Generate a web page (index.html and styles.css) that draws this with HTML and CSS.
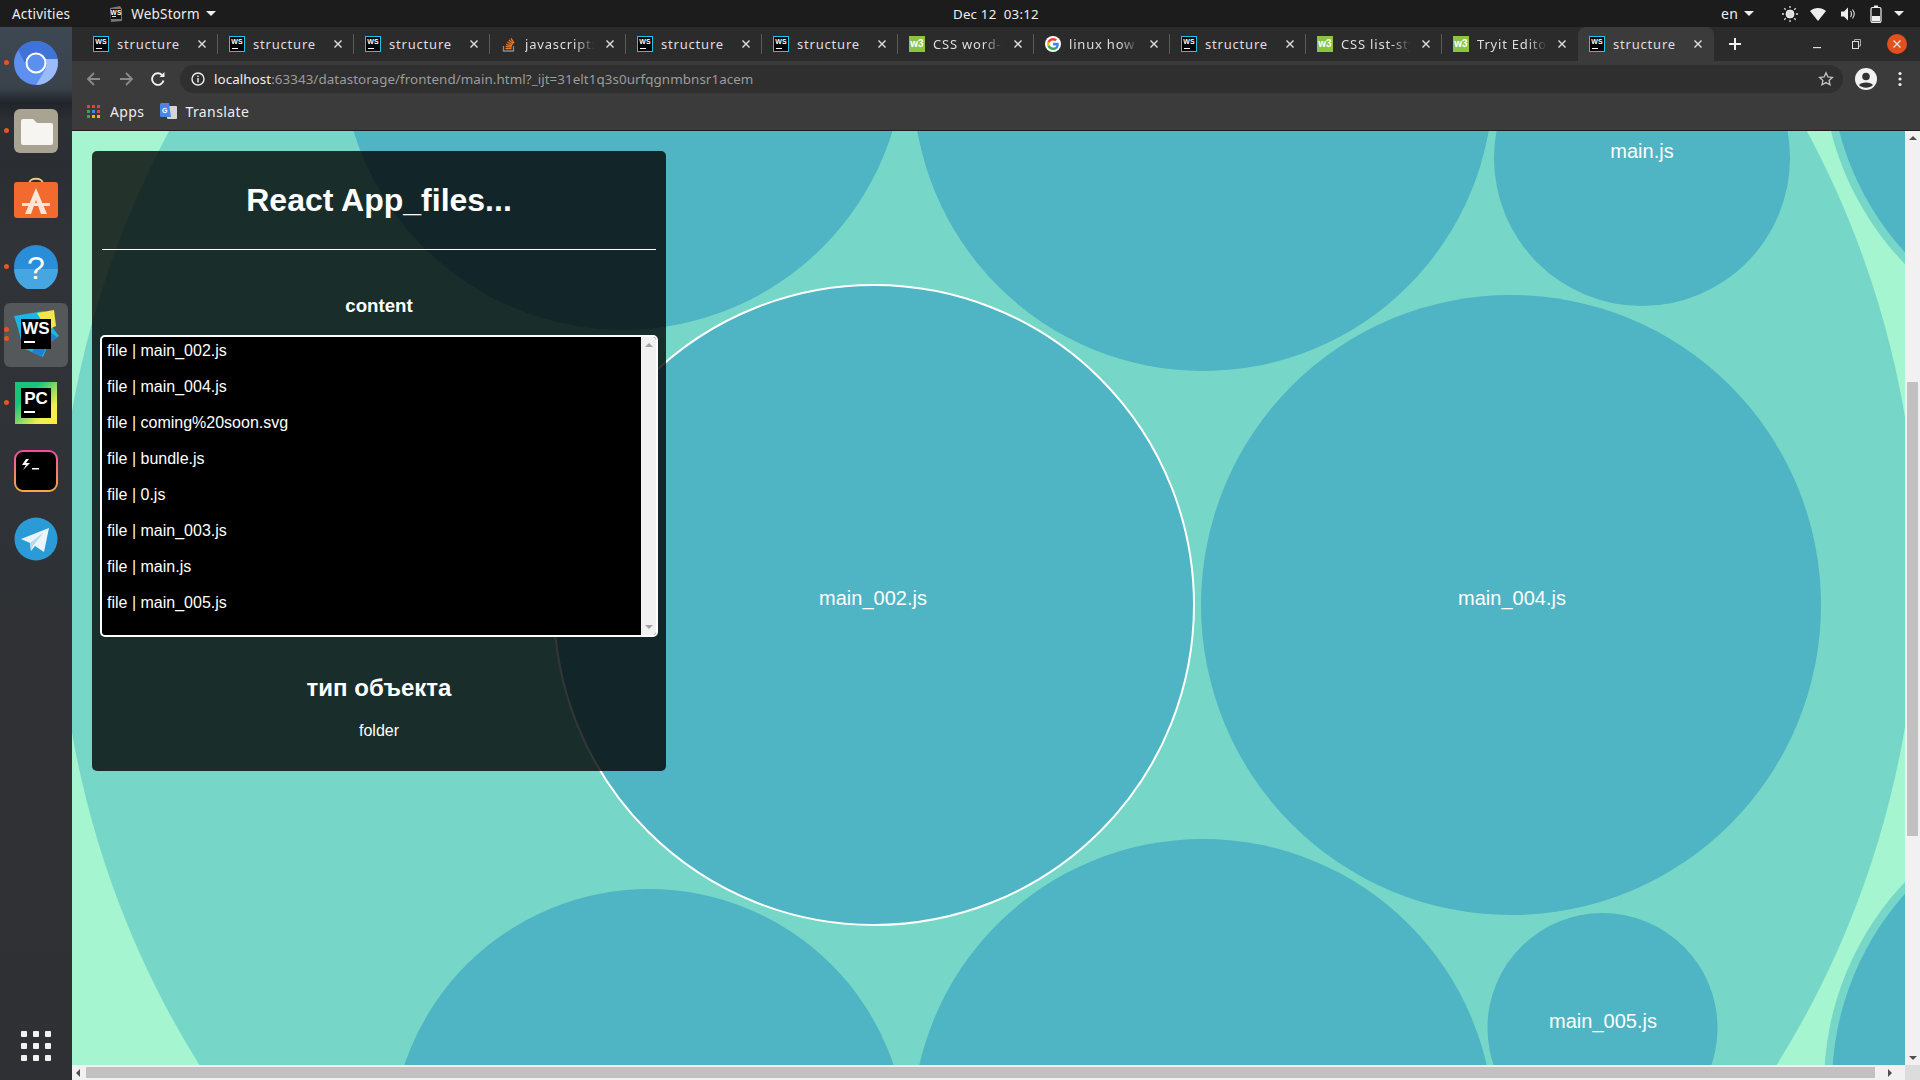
FILE: index.html
```html
<!DOCTYPE html>
<html lang="ru">

<head>
    <meta charset="UTF-8">
    <title>structure</title>
    <link rel="stylesheet" href="styles.css">
</head>

<body>
    <svg class="defs" width="0" height="0">
        <symbol id="i-x" viewBox="0 0 10 10">
            <path d="M1.5 1.5l7 7M8.5 1.5l-7 7" stroke="#e2e2e2" stroke-width="1.4" fill="none"/>
        </symbol>
    </svg>

    <header class="topbar">
        <div class="topbar-left">
            <span class="activities">Activities</span>
            <svg class="app-icon" width="14" height="18" viewBox="0 0 14 18"><path d="M1 3l10-2 2 3v12l-11 1z" fill="#777"/><rect x="2" y="4" width="10" height="10" fill="#111"/><rect x="3" y="11" width="4" height="1" fill="#ddd"/><text x="7" y="9.5" class="ws-small" text-anchor="middle">WS</text></svg>
            <span class="app-name">WebStorm</span>
            <span class="caret"></span>
        </div>
        <div class="clock">Dec 12&nbsp; 03:12</div>
        <div class="tray">
            <span class="lang">en</span>
            <span class="caret"></span>
            <svg class="tray-sun" width="18" height="18" viewBox="0 0 18 18"><circle cx="9" cy="9" r="4" fill="#ddd" stroke="#eee"/><path d="M9 1v2M9 15v2M1 9h2M15 9h2M3.3 3.3l1.4 1.4M13.3 13.3l1.4 1.4M3.3 14.7l1.4-1.4M13.3 4.7l1.4-1.4" stroke="#ddd" stroke-width="1.3"/></svg>
            <svg class="tray-wifi" width="18" height="16" viewBox="0 0 18 16"><path d="M1 5c4.500-4 11.500-4 16 0l-8 10z" fill="#eee"/></svg>
            <svg class="tray-vol" width="16" height="16" viewBox="0 0 16 16"><path d="M1 5.500h3l4-4v13l-4-4h-3z" fill="#eee"/><path d="M10.500 5c1.200 1.800 1.200 4.200 0 6M12.500 3.500c2 2.600 2 6.400 0 9" stroke="#ddd" stroke-width="1.1" fill="none"/></svg>
            <svg class="tray-bat" width="12" height="18" viewBox="0 0 12 18"><rect x="1" y="2.500" width="10" height="15" rx="1.500" fill="none" stroke="#eee" stroke-width="1.200"/><rect x="4" y="0.500" width="4" height="2" fill="#eee"/><rect x="2" y="11" width="8" height="5.500" fill="#eee"/></svg>
            <span class="caret"></span>
        </div>
    </header>

    <div class="desktop">
        <nav class="dock">
            <div class="dock-item has-dot">
                <svg width="44" height="44" viewBox="0 0 44 44">
                    <circle cx="22" cy="22" r="22" fill="#5d90ef"/>
                    <path d="M4 9A22 22 0 0 1 43.500 18H22a11 11 0 0 0-10 6z" fill="#3f73d8"/>
                    <path d="M43.500 18A22 22 0 0 1 22 44l9-15a11 11 0 0 0 0-11z" fill="#9bbcf8"/>
                    <circle cx="22" cy="22" r="9.500" fill="#5b8ff0" stroke="#fff" stroke-width="2"/>
                </svg>
            </div>
            <div class="dock-item has-dot">
                <svg width="44" height="44" viewBox="0 0 44 44">
                    <rect width="44" height="44" rx="6" fill="#a9a392"/>
                    <path d="M7 12a2 2 0 0 1 2-2h10l4 4h14a2 2 0 0 1 2 2v18a2 2 0 0 1-2 2H9a2 2 0 0 1-2-2z" fill="#f7f5f2"/>
                </svg>
            </div>
            <div class="dock-item">
                <svg width="44" height="44" viewBox="0 0 44 44">
                    <path d="M15 7c0-7 14-7 14 0" stroke="#e9c58a" stroke-width="2" fill="none"/>
                    <rect y="5" width="44" height="36" rx="3" fill="#f26a2e"/>
                    <path d="M22 11l-11 26h6l5-14 5 14h6z" fill="#fbe6da"/>
                    <rect x="8" y="26" width="28" height="3" fill="#fbe6da"/>
                </svg>
            </div>
            <div class="dock-item has-dot">
                <svg width="44" height="44" viewBox="0 0 44 44">
                    <circle cx="22" cy="22" r="22" fill="#2a8dd8"/>
                    <path d="M0 24h44a22 22 0 0 1-44 0z" fill="#45a6e2"/>
                    <text x="22" y="34" class="help-mark" text-anchor="middle">?</text>
                </svg>
            </div>
            <div class="dock-item active has-dot two-dots">
                <svg width="50" height="50" viewBox="0 0 50 50">
                    <path d="M3 6l30-5 5 12 10 13-10 7-6 14-20-9-5-20z" fill="#1cb6e0"/>
                    <path d="M26 3l17-3 2 16-9 4z" fill="#f4e64a"/>
                    <path d="M36 20l10 7-9 7-6 12-10-4z" fill="#1f7fd6"/>
                    <rect x="10" y="9" width="30" height="30" fill="#000"/>
                    <text x="25" y="24" class="ws-big" text-anchor="middle">WS</text>
                    <rect x="13" y="31" width="11" height="2" fill="#fff"/>
                </svg>
            </div>
            <div class="dock-item has-dot">
                <svg width="42" height="42" viewBox="0 0 42 42">
                    <defs><linearGradient id="pc-bg" x1="0" y1="0" x2="1" y2="1"><stop offset=".3" stop-color="#18c47c"/><stop offset=".75" stop-color="#f5ee4c"/></linearGradient></defs>
                    <rect width="42" height="42" fill="url(#pc-bg)"/>
                    <rect x="6" y="6" width="30" height="30" fill="#000"/>
                    <text x="21" y="22" class="ws-big" text-anchor="middle">PC</text>
                    <rect x="9" y="29" width="11" height="2" fill="#fff"/>
                </svg>
            </div>
            <div class="dock-item">
                <svg width="44" height="42" viewBox="0 0 44 42">
                    <defs><linearGradient id="term-line" x1="0" y1="0" x2="0" y2="1"><stop offset="0" stop-color="#ee4fa0"/><stop offset="1" stop-color="#f6a945"/></linearGradient></defs>
                    <rect x="1" y="1" width="42" height="40" rx="8" fill="#000" stroke="url(#term-line)" stroke-width="2"/>
                    <path d="M12 9l-4 6h4l-3 5 7-7h-4l3-4z" fill="#fff"/>
                    <rect x="18" y="18" width="7" height="1.500" fill="#fff"/>
                </svg>
            </div>
            <div class="dock-item">
                <svg width="44" height="44" viewBox="0 0 44 44">
                    <circle cx="22" cy="22" r="21.500" fill="#2a9bd6"/>
                    <path d="M7 22L35 11l-5 24-9-6-4 5-1-8z" fill="#e9f4fb"/>
                    <path d="M16 26l14-11-11 14-2 5z" fill="#bcd9ea"/>
                </svg>
            </div>
            <div class="dock-grid">
                <i></i><i></i><i></i><i></i><i></i><i></i><i></i><i></i><i></i>
            </div>
        </nav>

        <div class="browser">
            <div class="tabstrip">
                <div class="tab"><span class="ws-ico">WS</span><span class="tab-title">structure</span><svg class="tab-close"><use href="#i-x"/></svg></div>
                <div class="tab"><span class="ws-ico">WS</span><span class="tab-title">structure</span><svg class="tab-close"><use href="#i-x"/></svg></div>
                <div class="tab"><span class="ws-ico">WS</span><span class="tab-title">structure</span><svg class="tab-close"><use href="#i-x"/></svg></div>
                <div class="tab"><svg class="tab-icon" viewBox="0 0 16 16"><path d="M2.500 10v5h10v-5" stroke="#8a8a8a" stroke-width="1.300" fill="none"/><path d="M4.500 12.700h6M4.700 10.500l6 .6M5.200 8.300l5.800 1.600M6.300 6l5.200 2.800M8 4l4.300 3.800M10 2.300l3 4.700" stroke="#f07a1d" stroke-width="1.300"/></svg><span class="tab-title fade">javascript: c</span><svg class="tab-close"><use href="#i-x"/></svg></div>
                <div class="tab"><span class="ws-ico">WS</span><span class="tab-title">structure</span><svg class="tab-close"><use href="#i-x"/></svg></div>
                <div class="tab"><span class="ws-ico">WS</span><span class="tab-title">structure</span><svg class="tab-close"><use href="#i-x"/></svg></div>
                <div class="tab"><span class="w3-ico">w3</span><span class="tab-title fade">CSS word-wrap</span><svg class="tab-close"><use href="#i-x"/></svg></div>
                <div class="tab"><svg class="tab-icon" viewBox="0 0 16 16"><circle cx="8" cy="8" r="8" fill="#fff"/><path d="M13.800 8.200c0-.5 0-1-.1-1.400H8v2.700h3.300c-.2.800-.6 1.400-1.200 1.900l1.900 1.500c1.100-1.100 1.800-2.700 1.800-4.700z" fill="#4285f4"/><path d="M8 14c1.600 0 3-.5 4-1.500l-1.900-1.500c-.5.400-1.200.6-2.100.6-1.600 0-2.900-1-3.400-2.500l-2 1.500C3.600 12.700 5.600 14 8 14z" fill="#34a853"/><path d="M4.600 9.200c-.3-.8-.3-1.600 0-2.400l-2-1.600c-.8 1.700-.8 3.800 0 5.500z" fill="#fbbc05"/><path d="M8 4.400c.9 0 1.700.3 2.300.9L12 3.600C11 2.600 9.600 2 8 2 5.600 2 3.600 3.300 2.600 5.200l2 1.600C5.100 5.400 6.400 4.400 8 4.400z" fill="#ea4335"/></svg><span class="tab-title fade">linux how to</span><svg class="tab-close"><use href="#i-x"/></svg></div>
                <div class="tab"><span class="ws-ico">WS</span><span class="tab-title">structure</span><svg class="tab-close"><use href="#i-x"/></svg></div>
                <div class="tab"><span class="w3-ico">w3</span><span class="tab-title fade">CSS list-style</span><svg class="tab-close"><use href="#i-x"/></svg></div>
                <div class="tab no-line"><span class="w3-ico">w3</span><span class="tab-title fade">Tryit Editor v3</span><svg class="tab-close"><use href="#i-x"/></svg></div>
                <div class="tab current"><span class="ws-ico">WS</span><span class="tab-title">structure</span><svg class="tab-close"><use href="#i-x"/></svg></div>
                <svg class="new-tab" width="14" height="14" viewBox="0 0 14 14"><path d="M7 1v12M1 7h12" stroke="#f2f2f2" stroke-width="2"/></svg>
                <div class="window-btns">
                    <svg width="10" height="10" viewBox="0 0 10 10"><rect y="8" width="8" height="1.200" fill="#ddd"/></svg>
                    <svg width="10" height="10" viewBox="0 0 10 10"><rect x=".5" y="2.500" width="6" height="7" fill="none" stroke="#ddd"/><path d="M2.500 2V.5h6v6.500H7" fill="none" stroke="#aaa"/></svg>
                    <span class="win-close"><svg width="10" height="10"><use href="#i-x"/></svg></span>
                </div>
            </div>

            <div class="toolbar">
                <svg class="nav-icon" width="16" height="16" viewBox="0 0 16 16"><path d="M14 8H2.500M8 2L2 8l6 6" stroke="#8a8a8a" stroke-width="1.800" fill="none"/></svg>
                <svg class="nav-icon" width="16" height="16" viewBox="0 0 16 16"><path d="M2 8h11.500M8 2l6 6-6 6" stroke="#8a8a8a" stroke-width="1.800" fill="none"/></svg>
                <svg class="nav-icon reload" width="16" height="16" viewBox="0 0 16 16"><path d="M13.500 9.500A5.800 5.800 0 1 1 12 4" stroke="#f2f2f2" stroke-width="1.900" fill="none"/><path d="M9.500 6h5V1z" fill="#f2f2f2"/></svg>
                <div class="omnibox">
                    <svg width="14" height="14" viewBox="0 0 14 14"><circle cx="7" cy="7" r="6" fill="none" stroke="#eee" stroke-width="1.400"/><rect x="6.300" y="6" width="1.400" height="4.500" fill="#eee"/><rect x="6.300" y="3.500" width="1.400" height="1.500" fill="#eee"/></svg>
                    <span class="url"><b>localhost</b>:63343/datastorage/frontend/main.html?_ijt=31elt1q3s0urfqgnmbnsr1acem</span>
                    <svg class="star" width="16" height="16" viewBox="0 0 16 16"><path d="M8 1.800l1.900 4.100 4.500.5-3.300 3 .9 4.400L8 11.600l-4 2.200.9-4.400-3.300-3 4.500-.5z" fill="none" stroke="#c4c4c4" stroke-width="1.300"/></svg>
                </div>
                <svg class="avatar" width="22" height="22" viewBox="0 0 22 22"><circle cx="11" cy="11" r="11" fill="#f2f2f2"/><circle cx="11" cy="8.500" r="3.800" fill="#333"/><path d="M4 17c1.500-3.500 12.500-3.500 14 0-3.500 3.500-10.500 3.500-14 0z" fill="#333"/></svg>
                <svg class="menu-dots" width="4" height="16" viewBox="0 0 4 16"><circle cx="2" cy="2.500" r="1.600" fill="#eee"/><circle cx="2" cy="8" r="1.600" fill="#eee"/><circle cx="2" cy="13.500" r="1.600" fill="#eee"/></svg>
            </div>

            <div class="bookmarks">
                <div class="bookmark">
                    <div class="apps-grid">
                        <i class="c-r"></i><i class="c-r"></i><i class="c-r"></i>
                        <i class="c-g"></i><i class="c-b"></i><i class="c-r"></i>
                        <i class="c-g"></i><i class="c-y"></i><i class="c-y"></i>
                    </div>
                    <span>Apps</span>
                </div>
                <div class="bookmark">
                    <svg width="17" height="17" viewBox="0 0 17 17"><rect x="7" y="3" width="10" height="13" rx="1" fill="#d5d5d5"/><path d="M1.500 0H9l2 14H1.500A1.500 1.500 0 0 1 0 12.500v-11A1.500 1.500 0 0 1 1.500 0z" fill="#4a86e8"/><text x="5" y="10" class="g-mark" text-anchor="middle">G</text></svg>
                    <span>Translate</span>
                </div>
            </div>

            <div class="viewport">
                <div class="canvas">
                    <svg class="bubbles" viewBox="72 131 1833 934" width="1833" height="934">
                        <circle class="b-root" cx="988" cy="572" r="930"/>
                        <circle class="b-leaf" cx="623" cy="48" r="282"/>
                        <circle class="b-leaf" cx="1203" cy="81" r="290"/>
                        <circle class="b-leaf" cx="1642" cy="158" r="148"/>
                        <circle class="b-leaf selected" cx="874" cy="605" r="320"/>
                        <circle class="b-leaf" cx="1511" cy="605" r="310"/>
                        <circle class="b-leaf" cx="649" cy="1147" r="258"/>
                        <circle class="b-leaf" cx="1203" cy="1130" r="291"/>
                        <circle class="b-leaf" cx="1602.500" cy="1028" r="115"/>
                        <circle class="b-root" cx="2117" cy="59" r="295"/>
                        <circle class="b-leaf" cx="2117" cy="59" r="287"/>
                        <circle class="b-root" cx="2119" cy="1085" r="295"/>
                        <circle class="b-leaf" cx="2119" cy="1085" r="287"/>
                        <text class="b-label" x="1642" y="158">main.js</text>
                        <text class="b-label" x="873" y="605">main_002.js</text>
                        <text class="b-label" x="1512" y="605">main_004.js</text>
                        <text class="b-label" x="1603" y="1028">main_005.js</text>
                    </svg>

                    <aside class="info-panel">
                        <h1 class="panel-title">React App_files...</h1>
                        <hr class="panel-line">
                        <h3 class="panel-sub">content</h3>
                        <div class="file-box">
                            <ul class="file-list">
                                <li>file | main_002.js</li>
                                <li>file | main_004.js</li>
                                <li>file | coming%20soon.svg</li>
                                <li>file | bundle.js</li>
                                <li>file | 0.js</li>
                                <li>file | main_003.js</li>
                                <li>file | main.js</li>
                                <li>file | main_005.js</li>
                            </ul>
                            <div class="box-scroll">
                                <span class="arrow-up small"></span>
                                <span class="arrow-down small"></span>
                            </div>
                        </div>
                        <h2 class="panel-type">тип объекта</h2>
                        <p class="panel-value">folder</p>
                    </aside>
                </div>

                <div class="vbar">
                    <span class="arrow-up"></span>
                    <div class="vthumb"></div>
                    <span class="arrow-down"></span>
                </div>
                <div class="hbar">
                    <span class="arrow-left"></span>
                    <div class="hthumb"></div>
                    <span class="arrow-right"></span>
                </div>
                <div class="corner"></div>
            </div>
        </div>
    </div>
</body>

</html>
```

FILE: styles.css
```css
* {
    box-sizing: border-box;
}

html,
body {
    margin: 0;
    height: 100%;
    overflow: hidden;
}

body {
    display: flex;
    flex-direction: column;
    width: 1920px;
    height: 1080px;
    background-color: #1c1c1c;
    font-family: "Noto Sans", "Liberation Sans", sans-serif;
    color: #eeeeee;
}

.defs {
    position: absolute;
}

.ws-small {
    font: 700 6.5px "Liberation Sans", sans-serif;
    fill: #ffffff;
}

.ws-big {
    font: 700 17px "Liberation Sans", sans-serif;
    fill: #ffffff;
}

.help-mark {
    font: 400 32px "Liberation Sans", sans-serif;
    fill: #ffffff;
}

.g-mark {
    font: 700 7px "Liberation Sans", sans-serif;
    fill: #ffffff;
}

/* top bar */
.topbar {
    display: flex;
    align-items: center;
    justify-content: space-between;
    position: relative;
    height: 27px;
    padding: 0 16px 0 12px;
    background-color: #1c1c1c;
    font-size: 13.5px;
    letter-spacing: 0.2px;
}

.topbar-left,
.tray {
    display: flex;
    align-items: center;
}

.app-icon {
    margin-left: 39px;
    margin-right: 8px;
}

.caret {
    display: inline-block;
    margin-left: 6px;
    border-left: 5px solid transparent;
    border-right: 5px solid transparent;
    border-top: 5px solid #eeeeee;
}

.clock {
    position: absolute;
    left: 953px;
    font-size: 13.3px;
}

.lang {
    font-size: 14px;
}

.tray-sun {
    margin-left: 27px;
}

.tray-wifi {
    margin-left: 10px;
}

.tray-vol {
    margin-left: 13px;
}

.tray-bat {
    margin-left: 14px;
}

.tray .caret:last-child {
    margin-left: 12px;
}

/* dock */
.desktop {
    display: flex;
    flex: 1;
    min-height: 0;
}

.dock {
    display: flex;
    flex-direction: column;
    align-items: center;
    position: relative;
    width: 72px;
    padding-top: 14px;
    background: linear-gradient(#3e4853 0, #3a434c 60px, #20252a 76px, #2c3034 95px, #2a2d31 140px, #303337 220px, #2e3033 100%);
}

.dock-item {
    display: flex;
    align-items: center;
    justify-content: center;
    position: relative;
    width: 64px;
    height: 44px;
    margin-bottom: 24px;
}

.dock-item.active {
    height: 64px;
    margin-top: -10px;
    margin-bottom: 14px;
    border-radius: 6px;
    background-color: #55585b;
}

.has-dot::before {
    content: "";
    position: absolute;
    left: 0;
    top: 19px;
    width: 5px;
    height: 5px;
    border-radius: 50%;
    background-color: #e95420;
}

.two-dots::before {
    top: 24px;
    box-shadow: 0 9px 0 #e95420;
}

.dock-grid {
    display: grid;
    grid-template-columns: repeat(3, 6px);
    gap: 6px;
    position: absolute;
    left: 21px;
    bottom: 19px;
}

.dock-grid i {
    height: 6px;
    border-radius: 1px;
    background-color: #f2f2f2;
}

/* browser */
.browser {
    display: flex;
    flex-direction: column;
    flex: 1;
    min-width: 0;
}

.tabstrip {
    display: flex;
    align-items: stretch;
    height: 34px;
    padding-left: 11px;
    background-color: #2b2b2b;
    font-size: 13px;
}

.tab {
    display: flex;
    align-items: center;
    position: relative;
    flex: none;
    width: 136px;
    padding-left: 10px;
    letter-spacing: 0.8px;
    color: #dedede;
}

.tab::after {
    content: "";
    position: absolute;
    right: 1px;
    top: 7px;
    width: 1px;
    height: 20px;
    background-color: #5c5c5c;
}

.tab.no-line::after,
.tab.current::after {
    display: none;
}

.tab.current {
    margin-left: -1px;
    border-radius: 8px 8px 0 0;
    background-color: #3b3b3b;
    padding-left: 11px;
}

.tab-icon,
.ws-ico,
.w3-ico {
    flex: none;
    width: 16px;
    height: 16px;
    margin-right: 8px;
}

.ws-ico,
.w3-ico {
    position: relative;
    font-family: "Liberation Sans", sans-serif;
    font-weight: 700;
    letter-spacing: 0;
    text-align: center;
    color: #ffffff;
}

.ws-ico {
    padding-top: 1px;
    border: 1px solid #1cc4ee;
    background-color: #000000;
    font-size: 7px;
    line-height: 7px;
}

.ws-ico::after {
    content: "";
    position: absolute;
    left: 2px;
    bottom: 2px;
    width: 6px;
    height: 1px;
    background-color: #ffffff;
}

.w3-ico {
    background-color: #8ac441;
    font-size: 10px;
    line-height: 15px;
}

.tab-title {
    flex: none;
    width: 72px;
    overflow: hidden;
    white-space: nowrap;
}

.tab-title.fade {
    -webkit-mask-image: linear-gradient(to right, #000 70%, transparent 97%);
    mask-image: linear-gradient(to right, #000 70%, transparent 97%);
}

.tab-close {
    flex: none;
    width: 10px;
    height: 10px;
    margin-left: 8px;
}

.new-tab {
    align-self: center;
    margin-left: 14px;
}

.window-btns {
    display: flex;
    align-items: center;
    gap: 29px;
    margin-left: auto;
    padding-right: 13px;
}

.win-close {
    display: flex;
    align-items: center;
    justify-content: center;
    width: 20px;
    height: 20px;
    margin-left: -4px;
    border-radius: 50%;
    background-color: #e2501e;
}

.toolbar {
    display: flex;
    align-items: center;
    height: 36px;
    padding-left: 14px;
    background-color: #3b3b3b;
}

.nav-icon {
    margin-right: 16px;
}

.nav-icon.reload {
    margin-right: 14px;
}

.omnibox {
    display: flex;
    align-items: center;
    flex: none;
    width: 1663px;
    height: 28px;
    padding: 0 9px 0 11px;
    border-radius: 14px;
    background-color: #2f2f2f;
    font-size: 13.4px;
}

.url {
    margin-left: 9px;
    color: #9c9c9c;
    letter-spacing: 0.06px;
}

.url b {
    font-weight: 400;
    color: #f0f0f0;
}

.star {
    margin-left: auto;
}

.avatar {
    margin-left: 12px;
}

.menu-dots {
    margin-left: 21px;
}

.bookmarks {
    display: flex;
    align-items: center;
    gap: 16px;
    height: 34px;
    padding: 0 0 4px 15px;
    border-bottom: 1px solid #1d1d1d;
    background-color: #3b3b3b;
    font-size: 14px;
    letter-spacing: 0.4px;
}

.bookmark {
    display: flex;
    align-items: center;
    gap: 8px;
}

.apps-grid {
    display: grid;
    grid-template-columns: repeat(3, 3px);
    gap: 2px;
    margin-right: 2px;
}

.apps-grid i {
    height: 3px;
}

.c-r {
    background-color: #e0443a;
}

.c-g {
    background-color: #33a852;
}

.c-b {
    background-color: #4285f4;
}

.c-y {
    background-color: #f4b400;
}

/* page area */
.viewport {
    display: grid;
    grid-template-columns: 1833px 15px;
    grid-template-rows: 934px 15px;
    font-family: "Liberation Sans", Arial, sans-serif;
}

.canvas {
    position: relative;
    overflow: hidden;
    background-color: #a5f5d0;
}

.bubbles {
    display: block;
}

.b-root {
    fill: #76d7c8;
}

.b-leaf {
    fill: #4fb4c3;
}

.b-leaf.selected {
    stroke: #ffffff;
    stroke-width: 2;
}

.b-label {
    font-size: 20px;
    fill: #ffffff;
    text-anchor: middle;
}

.info-panel {
    display: flex;
    flex-direction: column;
    align-items: center;
    position: absolute;
    left: 20px;
    top: 20px;
    width: 574px;
    height: 620px;
    padding: 0 8px;
    border-radius: 5px;
    background-color: rgba(3, 3, 3, 0.8);
    color: #ffffff;
}

.panel-title {
    margin: 28px 0 0;
    font-size: 32px;
    line-height: 42px;
}

.panel-line {
    width: 554px;
    height: 1px;
    margin: 28px 0 0;
    border: 0;
    background-color: #ffffff;
}

.panel-sub {
    margin: 45px 0 0;
    font-size: 18.7px;
    line-height: 22px;
}

.file-box {
    display: flex;
    width: 558px;
    height: 302px;
    margin-top: 18px;
    overflow: hidden;
    border: 2px solid #ffffff;
    border-radius: 5px;
    background-color: #000000;
}

.file-list {
    flex: 1;
    margin: 0;
    padding: 1px 0 0 5px;
    list-style: none;
    font-size: 16px;
}

.file-list li {
    height: 36px;
    line-height: 26px;
}

.box-scroll,
.vbar {
    display: flex;
    flex-direction: column;
    align-items: center;
    background-color: #f1f1f1;
}

.box-scroll {
    justify-content: space-between;
    width: 15px;
    padding: 6px 0;
}

.panel-type {
    margin: 37px 0 0;
    font-size: 24px;
    line-height: 28px;
}

.panel-value {
    margin: 19px 0 0;
    font-size: 16px;
    line-height: 20px;
}

.vbar {
    position: relative;
    grid-column: 2;
    grid-row: 1;
    justify-content: space-between;
    padding: 5px 0;
}

.vthumb {
    position: absolute;
    top: 251px;
    left: 2px;
    width: 11px;
    height: 454px;
    background-color: #c1c1c1;
}

.hbar {
    display: flex;
    align-items: center;
    grid-column: 1;
    grid-row: 2;
    padding: 0 4px;
    background-color: #f1f1f1;
}

.hthumb {
    width: 1789px;
    height: 11px;
    margin-left: 6px;
    background-color: #c1c1c1;
}

.corner {
    background-color: #dcdcdc;
}

.arrow-up,
.arrow-down {
    width: 0;
    border-left: 4px solid transparent;
    border-right: 4px solid transparent;
}

.arrow-up {
    border-bottom: 4px solid #505050;
}

.arrow-down {
    border-top: 4px solid #505050;
}

.arrow-up.small {
    border-bottom-color: #a3a3a3;
}

.arrow-down.small {
    border-top-color: #a3a3a3;
}

.arrow-left,
.arrow-right {
    height: 0;
    border-top: 4px solid transparent;
    border-bottom: 4px solid transparent;
}

.arrow-left {
    border-right: 4px solid #505050;
}

.arrow-right {
    margin-left: 13px;
    border-left: 4px solid #505050;
}
```
